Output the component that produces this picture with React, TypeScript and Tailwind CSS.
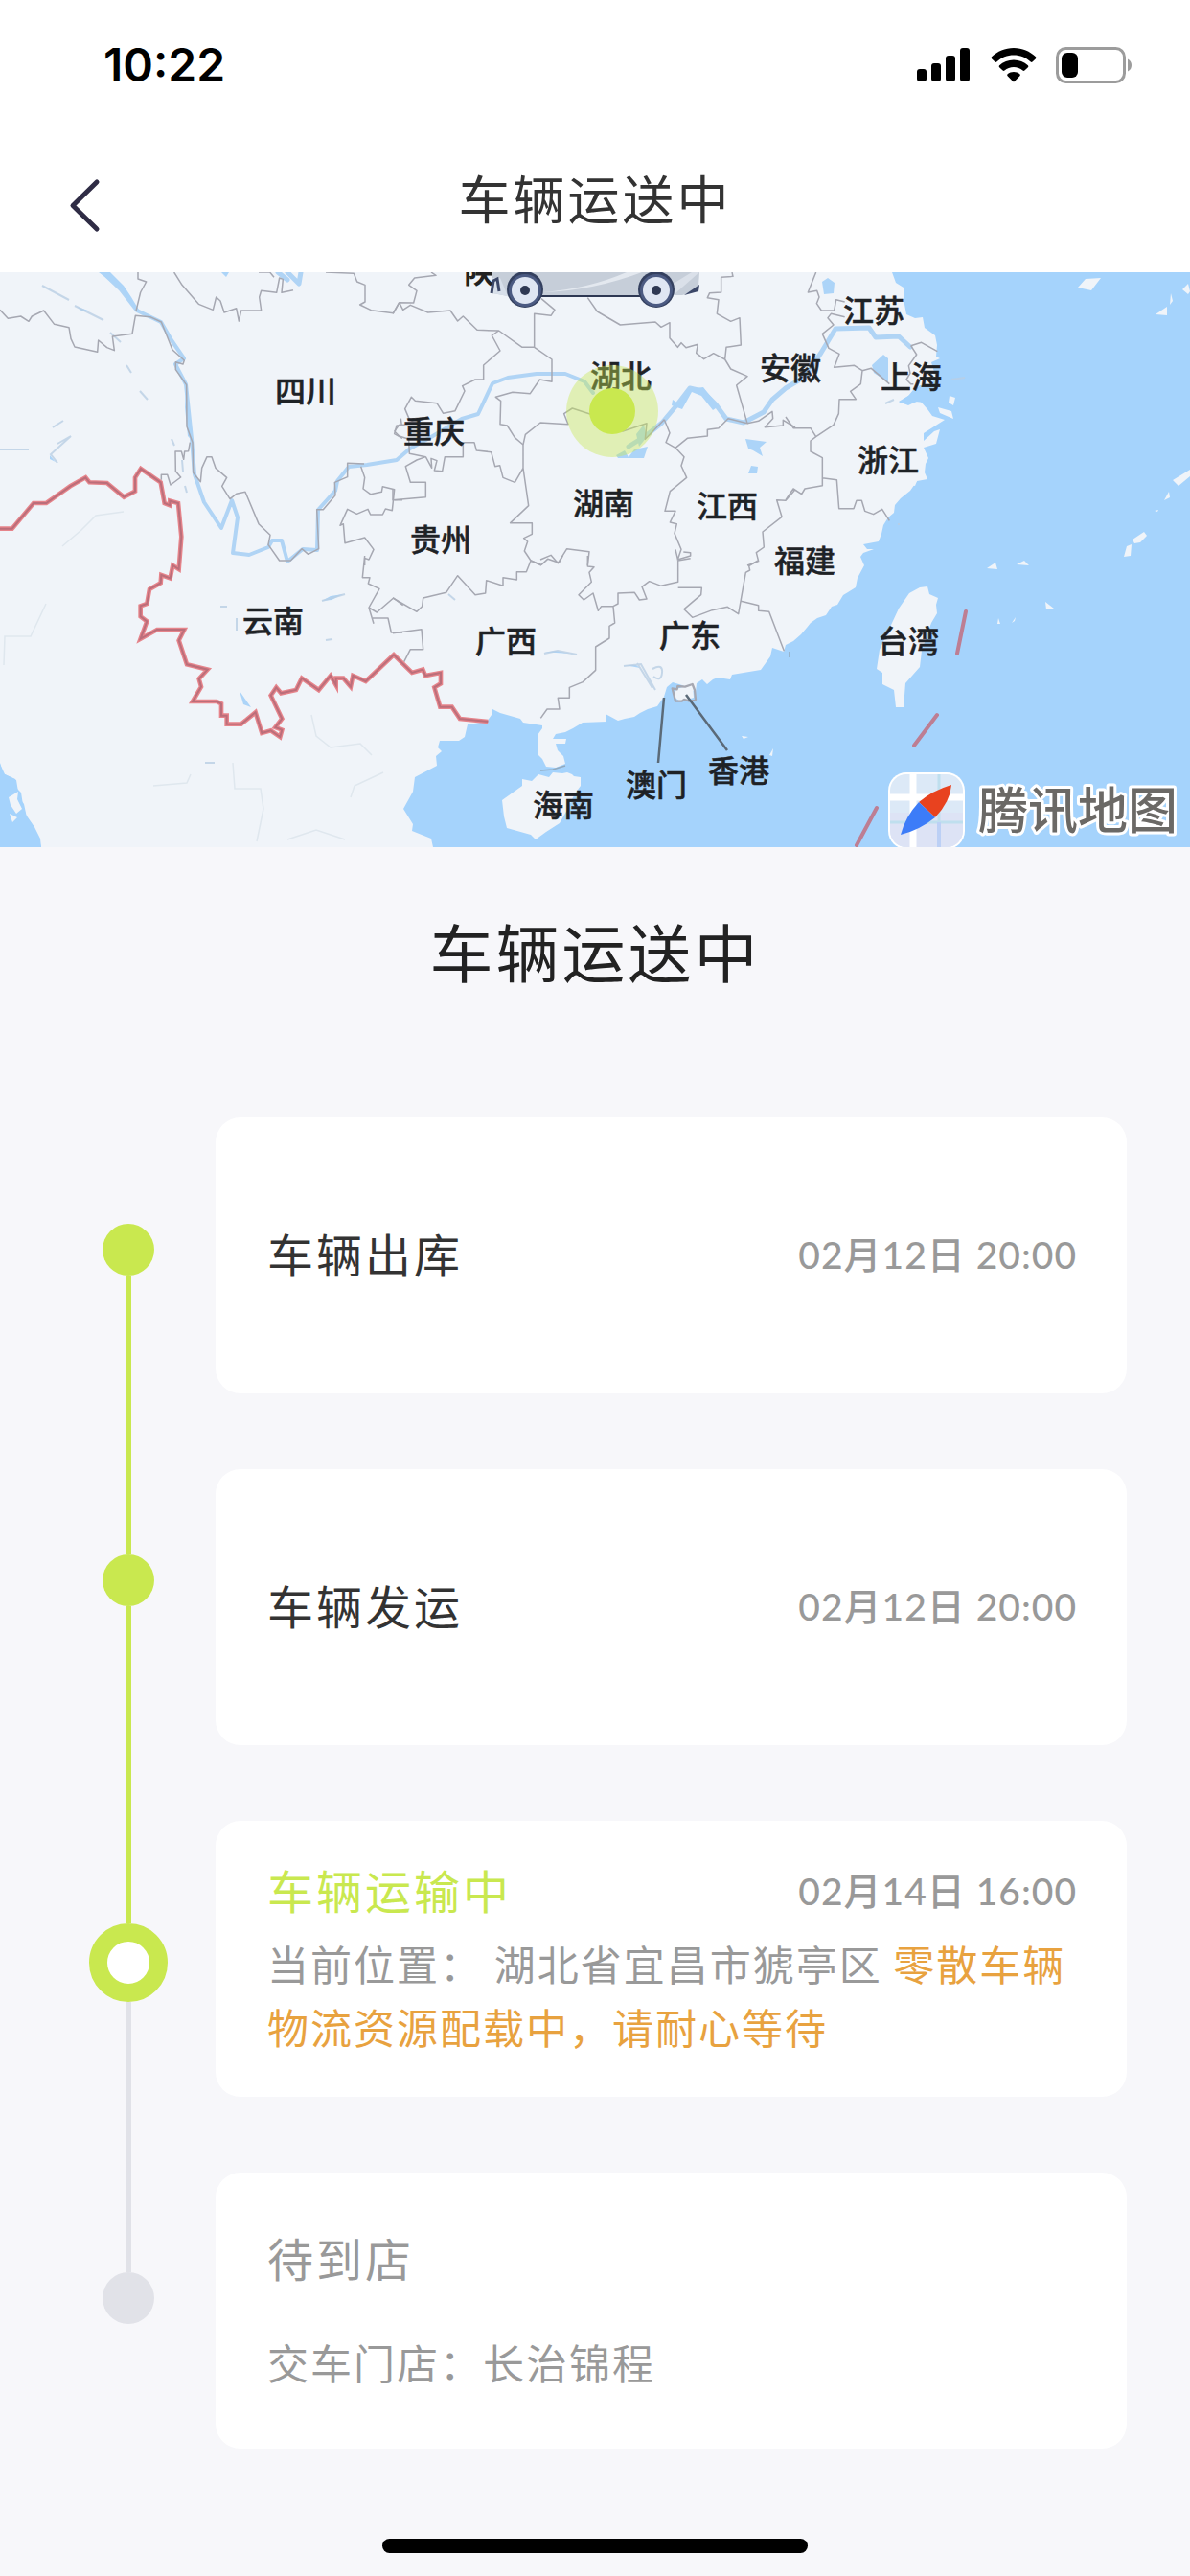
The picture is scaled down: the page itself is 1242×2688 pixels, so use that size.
const cjk = 'font-["Noto_Sans_CJK_SC",sans-serif]';

const SEA = '#a5d3fc';
const LAND = '#f0f4f9';

function StatusBar() {
  return (
    <div className="flex h-[136px] items-center justify-between pl-[108px] pr-[60px]">
      <span className="font-[Inter,sans-serif] text-[48px] leading-none font-semibold text-black">10:22</span>
      <div className="flex items-center gap-5">
        <svg width="57" height="36" viewBox="0 0 57 36" aria-label="信号">
          <rect x="0" y="22" width="10" height="13" rx="3" />
          <rect x="15" y="16" width="10" height="19" rx="3" />
          <rect x="30" y="8" width="10" height="27" rx="3" />
          <rect x="45" y="0" width="10" height="35" rx="3" />
        </svg>
        <svg width="48" height="36" viewBox="0 0 48 36" aria-label="无线网络">
          <path d="M24 0C33 0 41 3.500 47 9.300Q48 10.300 47 11.300L43.500 14.600Q42.600 15.400 41.700 14.500C36.900 10 30.700 7.500 24 7.500S11.100 10 6.300 14.500Q5.400 15.400 4.500 14.600L1 11.300Q0 10.300 1 9.300C7 3.500 15 0 24 0Z" />
          <path d="M24 12.500C29.700 12.500 34.900 14.600 38.900 18.200Q39.900 19.200 38.900 20.200L35.400 23.600Q34.500 24.400 33.500 23.600C30.900 21.400 27.600 20 24 20S17.100 21.400 14.500 23.600Q13.500 24.400 12.600 23.600L9.100 20.200Q8.100 19.200 9.100 18.200C13.100 14.600 18.300 12.500 24 12.500Z" />
          <path d="M24 25C26.500 25 28.500 25.700 30.400 27.200Q31.400 28.200 30.400 29.200L25 34.700Q24 35.700 23 34.700L17.600 29.200Q16.600 28.200 17.600 27.200C19.500 25.700 21.500 25 24 25Z" />
        </svg>
        <svg width="80" height="38" viewBox="0 0 80 38" aria-label="电量">
          <rect x="1.500" y="1.500" width="70" height="35" rx="9" fill="none" stroke="#9c9c9c" strokeWidth="3" />
          <rect x="6" y="6" width="17" height="26" rx="6" />
          <path d="M75 12.500Q79 14.500 79 19T75 25.500Z" fill="#9c9c9c" />
        </svg>
      </div>
    </div>
  );
}

function NavBar() {
  return (
    <header className="grid h-[148px] grid-cols-[1fr_auto_1fr] items-center">
      <button type="button" aria-label="返回" className="ml-16 flex h-20 w-16 items-center pt-2">
        <svg width="48" height="60" viewBox="0 0 48 60" fill="none" stroke="#2f2c45" strokeWidth="5" strokeLinecap="round" strokeLinejoin="round">
          <path d="M37 6L12 30.500L37 55" />
        </svg>
      </button>
      <h1 className="pb-2 text-[54px] leading-none tracking-[3px] text-[#333]">车辆运送中</h1>
    </header>
  );
}

type Label = { name: string; x: number; y: number };

const labels: Label[] = [
  { name: '四川', x: 319, y: 420 },
  { name: '重庆', x: 453, y: 462 },
  { name: '贵州', x: 460, y: 575 },
  { name: '云南', x: 285, y: 660 },
  { name: '湖北', x: 648, y: 404 },
  { name: '湖南', x: 630, y: 537 },
  { name: '江西', x: 759, y: 540 },
  { name: '安徽', x: 825, y: 396 },
  { name: '江苏', x: 912, y: 336 },
  { name: '上海', x: 951, y: 405 },
  { name: '浙江', x: 927, y: 492 },
  { name: '福建', x: 840, y: 597 },
  { name: '广西', x: 528, y: 681 },
  { name: '广东', x: 720, y: 675 },
  { name: '台湾', x: 948, y: 681 },
  { name: '海南', x: 588, y: 852 },
  { name: '澳门', x: 685, y: 831 },
  { name: '香港', x: 771, y: 816 },
];

const third = 'scale(0.33333)';

const nationalBorder =
  'M0 815H38L105 735H145L220 682L268 655L280 670L335 672L388 716L423 698V655L441 627L503 670L515 735L532 742V728L558 735L568 840L560 942L541 930L533 970L505 960L503 985L468 1005L460 1050L440 1057V1090L460 1105L440 1160L492 1131H577L560 1165L585 1240L650 1256L623 1285L630 1310L603 1356H678L693 1363V1400H710V1427H755L800 1390L820 1455L848 1447L877 1467L883 1445L862 1437L883 1410L848 1337L865 1312L880 1330L927 1320L945 1283L998 1320L1035 1275L1052 1305V1283H1075L1098 1310L1105 1275L1145 1293L1233 1210L1290 1266L1324 1256L1332 1275L1380 1266V1300L1360 1312L1378 1373H1415L1440 1410L1528 1419';

function MapDrawing() {
  return (
    <svg className="block h-[600px] w-full" viewBox="0 284 1242 600" preserveAspectRatio="xMidYMid slice" role="img" aria-label="车辆位置地图">
      <rect x="0" y="284" width="1242" height="600" fill={SEA} />

      {/* mainland */}
      <path
        fill={LAND}
        d="M0 284H931L935 295L943 300L943 312L946 328L955 332L963 331L965 342L976 350L978 360L977 372L981 374L972 378L977 395L965 404L953 407L948 413L938 420L948 422L960 418L968 427L973 434L986 438L964 452L964 460L975 450L981 448L977 463L964 467L969 478L966 484L965 493L968 500L957 502L950 512L940 520L934 527L933 535L927 540L922 548L920 557L917 565L901 568L905 573L912 573L901 577L898 581L902 590L895 603L893 613L885 618L880 621L874 631L868 633L862 642L853 645L846 650L842 655L836 662L828 669L820 673L818 680L806 676L804 685L794 699L764 704L762 709L749 707L744 709L738 714L733 709L727 713L726 722L712 715L702 712L696 717L693 727L686 737L676 740L668 744L662 748L652 750L645 752L632 745L633 753L608 754L598 760L590 764L580 766L577 771L591 771L590 776L580 776L582 783L588 789L590 797L580 801L570 800L566 792L562 788L561 767L566 760L566 757L546 754L543 750L522 744L514 740L513 746L508 753L488 756L485 769L479 773L459 773L457 780L461 784L455 789L456 799L433 811L431 826L421 844L431 860L430 867L450 875L452 884H43L40 873L34 861L28 853L25 839L20 832L17 814L5 808L0 797Z"
      />
      {/* bay in the south-west */}
      <path fill={SEA} d="M0 796L3 807L16 813L17 822L22 827L24 840L27 850L36 863L42 875L43 884H0Z" />
      <path fill={LAND} d="M9 832L19 826L18 834L23 844L17 849L11 840ZM10 849L18 853L13 858Z" />
      {/* Hangzhou bay */}
      <path fill={SEA} d="M938 419L953 410L960 402L978 402L985 425L981 435L972 429L964 420L956 419L948 423Z" />
      {/* islands */}
      <path fill={LAND} d="M526 852L524 835L545 820L545 813L555 815L562 808L573 811L577 806L587 807L592 806L597 808L599 810L606 811L606 820L600 828L592 845L584 859L570 868L559 876L554 871L529 864Z" />
      <path fill={LAND} d="M968 612L970 620L979 624L977 631L978 640L972 650L962 679L960 696L945 713L943 738H935L933 720L921 714L921 702L915 698L918 678L938 635L949 619L960 613Z" />
      <path fill={LAND} d="M979 425L993 429L995 437L981 431ZM991 413L997 415L995 423L990 420ZM948 497L959 497L955 507L951 506ZM1133 291L1149 290L1139 303L1125 300ZM1206 328L1218 320L1218 329ZM1221 318L1222 306L1224 314ZM1234 302L1240 296L1242 304L1240 307ZM1224 501L1242 490V497L1230 507ZM1215 522L1220 513L1221 519ZM1182 563L1194 555L1197 559L1190 566L1184 567ZM1176 570L1181 568L1180 580L1173 581ZM1030 593L1039 587L1041 594ZM1061 589L1069 585L1074 590ZM1091 628L1100 635L1092 636ZM1205 533L1209 532L1208 534ZM1042 645L1044 651L1041 651ZM1056 650L1060 644L1059 648Z" />
      <path fill={LAND} d="M706 719L723 714L724 728L710 732L703 727ZM774 768L781 769L776 771ZM803 788L807 781L806 789Z" />

      {/* inland water */}
      <g fill="none" stroke="#b0d4f5" strokeWidth="4" strokeLinejoin="round" strokeLinecap="round">
        <path d="M107 284L126 302L143 324L168 336L179 355L192 374L183 380L194 401L200 458L203 495L213 524L231 551L242 522L248 540L243 577L260 579L280 571L284 564L294 564L300 586L316 573L331 574L332 532L350 512L352 502L364 487L383 485L414 480L428 468L450 456L482 437L499 432L514 400L530 394L560 390L590 390L610 398L619 410" />
        <path d="M656 466L675 454L691 441L707 422L720 405L733 408L747 422L758 437L776 441L797 430L806 417L820 405L840 393L857 368L872 343L907 342L914 352L938 351L950 362" strokeWidth="5" />
        <path d="M300 284L312 296L314 284M290 284L300 292" strokeWidth="5" />
      </g>
      <g fill="#acd4f8">
        <path d="M103 284H115L129 298L137 310L146 325L139 320L127 302ZM194 405L201 460L196 455L193 425ZM702 417L708 421L718 406L734 404L750 424L744 428L732 413L722 409L712 427L701 423ZM778 458L800 461L793 467L796 476L786 470L781 468ZM784 486L791 487L790 494L781 494ZM910 381L922 370L927 374L927 399L912 389ZM858 294L864 290L871 295L870 306L860 307ZM672 443L675 456L667 466L664 453ZM643 475L652 470L656 477L662 469L676 466L672 478L645 478ZM231 284H239L236 289ZM897 857L912 860Z" />
        <path d="M52 475L57 481L60 483L52 479ZM80 320L92 324L85 324ZM44 298L50 301ZM336 627L345 622L358 620L346 626ZM250 721L257 731L262 738L254 735ZM652 694L668 697L664 694ZM568 681L580 679L595 682L580 681Z" />
      </g>
      <g fill="none" stroke="#b9cee4" strokeWidth="2" opacity="0.8">
        <path d="M44 298L72 313M78 319L108 334M115 347L126 357M132 381L137 389M146 408L154 417M55 446L66 439M60 463L74 455L53 474L60 483M0 469H30M179 458L182 465M190 480L191 492M193 507L195 514M336 627L360 620M230 633H237M247 645V658M340 668L347 667M214 796H224M651 695L669 693L684 720M665 692L681 718M681 698Q692 692 691 702T682 706M568 682L582 679L602 683M468 620L475 626" />
        <path d="M993 396L1000 395L1007 394M924 421L933 417M937 547H939" />
      </g>
      <path fill="none" stroke="#dfe7ee" strokeWidth="1.5" d="M65 570L85 553L100 538L129 534M48 630L32 664L5 664L4 694M160 820L195 817L199 808M243 796L245 823L272 823L275 844L268 878M325 746L330 768L345 780L376 776L388 788M400 806L370 820L366 832M300 876L330 866L360 876" />

      {/* province borders */}
      <g fill="none" stroke="#a6a8b2" strokeWidth="4.500" strokeLinejoin="round">
        <g transform={`translate(0 280) ${third}`}>
          <path d="M0 130L25 157L65 150L90 166L100 150L137 132L170 175L216 185L222 220L234 246L305 262L308 225L335 248L358 257L352 213L414 205L424 148L470 152L505 168L520 205L540 255L577 288L573 300L550 293L550 317L584 365L585 495L603 545L605 640L628 668L632 625L648 590L663 590L675 625L710 655L695 682L720 722L740 706L768 700L810 800L846 835L840 865L875 915L910 915L945 878L965 895L998 878L992 755L1012 755L1050 710L1048 670L1088 653L1088 610L1140 612" />
          <path d="M432 12V33L458 42L440 75L426 133M545 12L570 52L622 112L667 130L677 90L690 102L702 138L740 125L748 165L755 132H818L812 90L818 70L866 76L875 30L886 34L882 76L918 68M810 12H845L858 28M1020 12L1108 16L1118 42L1143 52V105L1127 114L1162 131L1232 140L1250 108M595 545L590 572L578 573L575 598L568 573L549 573L550 635L566 654L534 678L524 646H505L505 662M1130 620L1142 655L1137 690L1160 707L1195 700L1198 683L1235 692L1228 758L1207 753L1198 771H1160L1152 754L1117 769L1088 754L1065 805L1075 800L1080 860L1142 843L1170 880L1155 912L1142 907V930M1235 725H1260M1255 470L1258 492H1242L1235 518L1260 532" />
        </g>
        <g transform={`translate(410 280) ${third}`}>
          <path d="M0 142L20 107L65 108L75 70L50 52L68 30L135 22L120 12M20 107L32 130L55 115L110 138L180 132L203 165L220 150L264 193L332 195L405 247H443L498 285V355L460 348L430 392L375 388L322 403L338 415L336 488L358 492L382 530L408 552M332 195L310 210L336 258L284 303V348H258L218 368L225 384L195 446L158 454L138 422L70 415L58 403L38 440L52 473M443 247V142L495 148L507 130L465 95M610 92L640 135L712 177L822 168L840 184L867 170V218L892 247L903 233L918 248L955 238L950 265L974 284L1004 266L1040 285L1044 247L1090 240L1086 155L1058 166L1015 142L1020 98L985 92L992 77L1028 75V28L1065 25L1062 12M1040 285L1058 315L1110 338L1076 366L1110 485L1050 470L1020 500L985 505L985 525L922 532L885 562L855 545L867 515L850 473" />
          <path d="M850 473L790 535L795 485L720 510L615 455L562 438L536 455L549 488L462 483L415 520L408 552V625L425 743L368 797H436V832L410 845L422 855L412 885L432 915L465 930M408 625L382 670L345 655L335 617L320 620L308 575L262 570L255 545H220V590H163L155 635L130 633L138 602L120 595L122 625L103 590L75 600L40 620L55 670H103V716L0 725V690M103 590L52 580L50 535M5 510L20 490H38M5 510L20 525L50 535M885 562L912 590L903 618L920 655L868 698L852 760H885L868 795L889 800L882 830L903 880L892 912L932 900V890L910 888M1110 485L1145 478L1188 448L1190 470L1165 497L1222 492V475L1260 498M1260 692L1230 727L1202 725L1218 778L1158 825L1162 873L1138 890L1145 917L1110 930M462 912L495 898L517 923L545 878L615 887L610 930M885 880L892 910" />
        </g>
        <g transform={`translate(820 280) ${third}`}>
          <path d="M95 12L70 75L98 70L105 90L97 110L112 132H152L158 98L185 105M185 152L142 142L132 155L150 177L115 205L135 250L168 268L152 310L215 304L240 320L235 362L203 385L220 410H168L166 455L150 490L95 527L78 500H24L0 465M95 527L78 540V573L115 593V680L60 690L50 707L24 690L0 725M115 656L160 662L167 752H213L222 727H238L248 760L275 770L302 754L325 790M240 320L268 313L325 362M392 242L425 232L475 260M392 242L410 270L385 305L390 328L378 348L392 362H400" />
        </g>
        <g transform={`translate(0 580) ${third}`}>
          <path d="M1142 0L1135 68H1158L1153 87L1188 103L1155 162L1170 212M1155 162L1180 177L1232 132L1262 155M1167 195H1215L1225 240H1260" />
        </g>
        <g transform={`translate(410 580) ${third}`}>
          <path d="M0 132L75 175L92 158L95 132L167 115L203 62L258 122L290 117L293 77L345 94V68L388 75V50H418L432 15L465 28L485 10L520 22L532 0M610 0V33L630 35L615 52L622 82L582 122L598 138L627 117L643 172L653 158H690L705 150V117L757 115L772 138L795 135L780 97L803 80L840 94L893 82V15L932 8M893 100H967L965 122L912 167L938 193L1000 170L1048 160L1082 182L1105 52L1118 45L1115 32L1143 15M1090 142L1145 155V172L1178 175L1225 298M690 158L695 210L678 220V258L635 285V358L595 395L553 412V445H517L522 480H483L463 508M0 242L90 230L95 293H55L35 332" />
          <path d="M875 415L890 418L892 408L915 410L938 402L945 420L948 450L930 455L912 450L905 455H885L880 435Z" strokeWidth="7" />
        </g>
      </g>
      <path d="M564 804L577 803L590 799" stroke="#93aabe" strokeWidth="1.500" fill="none" />
      <path d="M824 680V686" stroke="#93aabe" strokeWidth="1.500" />

      {/* national border */}
      <g fill="none" transform={`translate(0 280) ${third}`}>
        <path d={nationalBorder} stroke="#e6848b" strokeWidth="14" />
        <path d={nationalBorder} stroke="#bb6e7a" strokeWidth="6" />
      </g>
      <path d="M1008 638L999 682M978 746L954 778M915 843L894 882" stroke="#bd7e93" strokeWidth="4" strokeLinecap="round" />
      <path d="M693 728L687 796M716 725L759 783" stroke="#5b6a78" strokeWidth="2.500" />

      <text x="500" y="295" textAnchor="middle" fontSize="31" fontWeight="700" fill="#222">陕</text>
      <g fontSize="32" fontWeight="500" fill="#1e2226" textAnchor="middle" stroke="#1e2226" strokeWidth="0.500">
        {labels.map((l) => (
          <text key={l.name} x={l.x} y={l.y}>{l.name}</text>
        ))}
      </g>

      {/* delivery vehicle */}
      <g>
        <path d="M513 284H730L729 299L722 305L712 308L530 309L514 306Z" fill="#c6ced9" />
        <path d="M513 290L522 290L530 309L515 306Z" fill="#d7dfea" />
        <path d="M567 305Q615 301 654 284H670Q620 303 567 305Z" fill="#e3e8ef" />
        <path d="M688 305L705 306L730 284H722Z" fill="#dae0e9" />
        <path d="M562 309H672" stroke="#2e3853" strokeWidth="2" />
        <path d="M714 308L730 297L729 304Z" fill="#3b4768" />
        <path d="M513 306L515 293L519 291L521 304" stroke="#3b4768" strokeWidth="3" fill="none" />
        {[548, 685].map((cx) => (
          <g key={cx}>
            <circle cx={cx} cy="302" r="19" fill="#34405f" />
            <circle cx={cx} cy="303" r="17" fill="#4b5a82" />
            <circle cx={cx} cy="303" r="14" fill="#dfe6f3" />
            <circle cx={cx} cy="303" r="5" fill="#2e3853" />
          </g>
        ))}
      </g>

      {/* current position */}
      <circle cx="639" cy="429" r="48" fill="#c8e850" fillOpacity="0.4" />
      <circle cx="639" cy="429" r="24" fill="#c9e84f" />

      {/* map provider */}
      <g>
        <clipPath id="logo-clip"><rect x="929" y="808" width="76" height="76" rx="17" /></clipPath>
        <rect x="927" y="806" width="80" height="80" rx="19" fill="#fff" />
        <g clipPath="url(#logo-clip)">
          <rect x="929" y="808" width="76" height="76" fill="#dce9f7" />
          <rect x="929" y="848" width="76" height="36" fill="#dde3f5" />
          <path d="M953 806V886M927 832H1007" stroke="#fff" strokeWidth="7" />
          <path d="M980 808V858M929 858H1005" stroke="#bfdfee" strokeWidth="3" />
          <path d="M980 858V884" stroke="#bcd0f5" strokeWidth="4" />
        </g>
        <path d="M993 819Q992 836 976 853L959 837Q973 825 993 819Z" fill="#e8421f" />
        <path d="M959 837L976 853Q960 866 940 871Q945 852 959 837Z" fill="#3c7cf8" />
        <text x="1125" y="865" textAnchor="middle" fontSize="52" fontWeight="500" fill="#6b6966" stroke="#fff" strokeWidth="6" paintOrder="stroke" strokeLinejoin="round">腾讯地图</text>
      </g>
    </svg>
  );
}

function Row({ title, time, tone }: { title: string; time?: string; tone: string }) {
  return (
    <div className="flex items-center justify-between">
      <h3 className={`text-[48px] leading-[72px] tracking-[3px] ${tone}`}>{title}</h3>
      {time && (
        <time className="pt-1 font-[Lato,'Noto_Sans_CJK_SC',sans-serif] text-[39px] leading-[66px] font-medium tracking-[1px] text-[#999]">{time}</time>
      )}
    </div>
  );
}

const card = 'flex h-[288px] flex-col justify-center rounded-[26px] bg-white pb-1.5 pl-[54px] pr-[52px]';

function Timeline() {
  return (
    <section className="flex gap-[50px] pl-[93px] pr-[66px]">
      <div className="flex w-[82px] shrink-0 flex-col items-center pt-[111px]" aria-hidden="true">
        <i className="block size-[54px] shrink-0 rounded-full bg-[#c9e84f]" />
        <i className="block h-[291px] w-[6px] bg-[#c9e84f]" />
        <i className="block size-[54px] shrink-0 rounded-full bg-[#c9e84f]" />
        <i className="block h-[331px] w-[6px] bg-[#c9e84f]" />
        <i className="block size-[82px] shrink-0 rounded-full border-[19px] border-[#c9e84f] bg-white" />
        <i className="block h-[282px] w-[6px] bg-[#e1e2e8]" />
        <i className="block size-[54px] shrink-0 rounded-full bg-[#e1e2e8]" />
      </div>
      <ol className="flex min-w-0 flex-1 flex-col gap-[79px]">
        <li className={card}>
          <Row title="车辆出库" time="02月12日 20:00" tone="text-[#333]" />
        </li>
        <li className={card}>
          <Row title="车辆发运" time="02月12日 20:00" tone="text-[#333]" />
        </li>
        <li className={card}>
          <Row title="车辆运输中" time="02月14日 16:00" tone="text-[#c9e84f]" />
          <p className="mt-2 text-[43px] leading-[66px] tracking-[2px] text-[#999]">
            当前位置： 湖北省宜昌市猇亭区 <span className="text-[#e8a23f]">零散车辆物流资源配载中，请耐心等待</span>
          </p>
        </li>
        <li className={card}>
          <Row title="待到店" tone="text-[#999]" />
          <p className="mt-10 text-[43px] leading-[66px] tracking-[2px] text-[#999]">交车门店：长治锦程</p>
        </li>
      </ol>
    </section>
  );
}

export default function App() {
  return (
    <div lang="zh-CN" className={`flex min-h-screen flex-col bg-[#f7f7fa] ${cjk}`}>
      <div className="bg-white">
        <StatusBar />
        <NavBar />
      </div>
      <MapDrawing />
      <main className="flex-1">
        <h2 className="pt-[62px] pb-[130px] text-center text-[66px] leading-[90px] tracking-[3px] text-[#222]">车辆运送中</h2>
        <Timeline />
      </main>
      <div className="flex justify-center pb-6">
        <div className="h-[15px] w-[444px] rounded-full bg-black" />
      </div>
    </div>
  );
}
